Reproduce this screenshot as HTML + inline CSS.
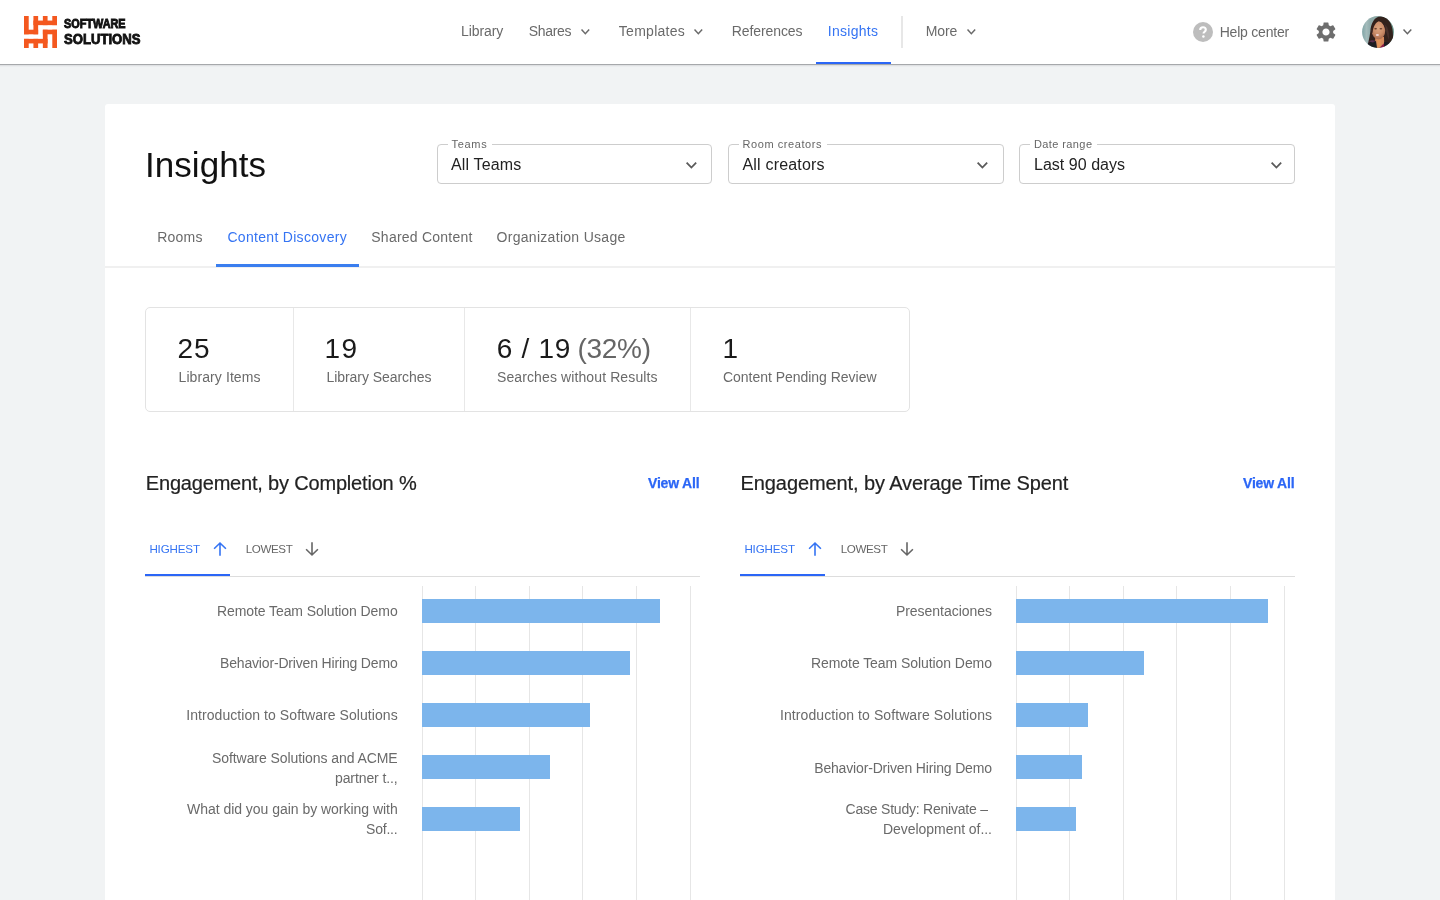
<!DOCTYPE html>
<html lang="en"><head><meta charset="utf-8"><title>Insights</title>
<style>
*{box-sizing:border-box;margin:0;padding:0}
html,body{width:1440px;height:900px;overflow:hidden}
body{background:#f1f3f4;font-family:"Liberation Sans",sans-serif;position:relative}
.t{position:absolute;white-space:nowrap;line-height:1;}
.b{position:absolute;display:block}
#L{position:absolute;left:0;top:0;width:1440px;height:900px;will-change:transform;transform:translateZ(0)}
#hdr{position:absolute;left:0;top:0;width:1440px;height:64px;background:#fff;}
#card{position:absolute;left:105px;top:104px;width:1230px;height:820px;background:#fff;border-radius:3px}
.sel{position:absolute;top:144px;height:40px;width:275px;border:1px solid #cdcdcd;border-radius:4px}
.lbg{position:absolute;top:143px;height:4px;background:#fff}
.logo1,.logo2{position:absolute;white-space:nowrap;line-height:1;font-weight:700;color:#111;transform-origin:0 0;-webkit-text-stroke:0.9px #111}
</style></head>
<body>
<div id="L">
<div id="card"></div>
<div id="hdr"></div>
<div class="b" style="left:0;top:64px;width:1440px;height:1px;background:#a6a8ab"></div>
<div class="b" style="left:0;top:65px;width:1440px;height:1px;background:#dfe1e3"></div>
<div class="b" style="left:0;top:66px;width:1440px;height:1px;background:#ebedef"></div>
<svg class="b" style="left:24px;top:16px" width="33" height="32" viewBox="0 0 33 32" fill="#f4581f"><rect x="0.00" y="0.00" width="4.71" height="18.29"/><rect x="0.00" y="13.71" width="14.14" height="4.57"/><rect x="9.43" y="0.00" width="4.71" height="18.29"/><rect x="9.43" y="4.57" width="23.57" height="4.57"/><rect x="18.86" y="0.00" width="4.71" height="9.14"/><rect x="28.29" y="0.00" width="4.71" height="9.14"/><rect x="28.29" y="13.71" width="4.71" height="18.29"/><rect x="18.86" y="13.71" width="14.14" height="4.57"/><rect x="18.86" y="13.71" width="4.71" height="18.29"/><rect x="0.00" y="22.86" width="23.57" height="4.57"/><rect x="9.43" y="22.86" width="4.71" height="9.14"/><rect x="0.00" y="22.86" width="4.71" height="9.14"/></svg>
<span class="logo1" style="left:64.200px;top:18px;font-size:12.300px;transform:scaleX(.884)">SOFTWARE</span>
<span class="logo2" style="left:64.200px;top:30.900px;font-size:15.200px;transform:scaleX(.863)">SOLUTIONS</span>
<div class="b" style="left:816px;top:62px;width:74.5px;height:2px;background:#2b66f6"></div>
<div class="b" style="left:901px;top:16px;width:2px;height:32px;background:#e7e7e7"></div>
<svg class="b" style="left:1193px;top:22px" width="20" height="20" viewBox="0 0 20 20"><circle cx="10" cy="10" r="10" fill="#bdbdbd"/><path d="M7.2 7.9c0-1.6 1.250-2.700 2.800-2.700s2.800 1.050 2.800 2.500c0 1.900-2.300 2.100-2.300 3.900" fill="none" stroke="#fff" stroke-width="2.1"/><circle cx="10.400" cy="14.500" r="1.250" fill="#fff"/></svg>
<svg class="b" style="left:1314px;top:20px" width="24" height="24" viewBox="0 0 24 24" fill="#6e6e6e"><path d="M19.14 12.94c.04-.3.06-.61.06-.94 0-.32-.02-.64-.07-.94l2.03-1.58a.49.49 0 0 0 .12-.61l-1.92-3.32a.488.488 0 0 0-.59-.22l-2.39.96c-.5-.38-1.03-.7-1.62-.94l-.36-2.54a.484.484 0 0 0-.48-.41h-3.84c-.24 0-.43.17-.47.41l-.36 2.54c-.59.24-1.13.57-1.62.94l-2.39-.96c-.22-.08-.47 0-.59.22L2.74 8.87c-.12.21-.08.47.12.61l2.03 1.58c-.05.3-.09.63-.09.94s.02.64.07.94l-2.03 1.58a.49.49 0 0 0-.12.61l1.92 3.32c.12.22.37.29.59.22l2.39-.96c.5.38 1.03.7 1.62.94l.36 2.54c.05.24.24.41.48.41h3.84c.24 0 .44-.17.47-.41l.36-2.54c.59-.24 1.13-.56 1.62-.94l2.39.96c.22.08.47 0 .59-.22l1.920-3.32c.12-.22.07-.47-.12-.61l-2.010-1.580zM12 15.600c-1.980 0-3.600-1.620-3.600-3.600s1.620-3.600 3.600-3.600 3.600 1.620 3.600 3.600-1.620 3.600-3.600 3.600z"/></svg>
<svg class="b" style="left:1362px;top:16px" width="32" height="32" viewBox="0 0 32 32"><defs><clipPath id="ac"><circle cx="16" cy="16" r="15.900"/></clipPath><filter id="ab" x="-20%" y="-20%" width="140%" height="140%"><feGaussianBlur stdDeviation="0.750"/></filter><linearGradient id="abg" x1="0" x2="1"><stop offset="0" stop-color="#7fa4a6"/><stop offset=".14" stop-color="#a4bbbb"/><stop offset=".26" stop-color="#8fabab"/><stop offset=".8" stop-color="#8fa9a0"/><stop offset="1" stop-color="#5f9388"/></linearGradient><radialGradient id="af" cx=".5" cy=".38" r=".65"><stop offset="0" stop-color="#dca57f"/><stop offset=".55" stop-color="#cc8f6b"/><stop offset="1" stop-color="#a5684b"/></radialGradient></defs><g clip-path="url(#ac)"><rect width="32" height="32" fill="url(#abg)"/><g filter="url(#ab)"><path d="M5 33 C6 27 7.500 22 8.300 16 C8.800 7 12.500 0.500 18.500 0.500 C26.500 0.500 30.200 8 30.800 16 C31.200 22 31 27 33 33 Z" fill="#33211e"/><path d="M22 8 C26 10 27.500 16 27 24 C25 20 24 14 22 8 Z" fill="#46302c"/><path d="M13.300 21 L22 21 L22.300 33 L12.800 33 Z" fill="#d48a5c"/><path d="M15 24 L19 24 L18.500 31 L15.500 31 Z" fill="#e0935a"/><ellipse cx="16.500" cy="14.300" rx="6.800" ry="9" fill="url(#af)"/><path d="M9.400 16 C9 9 12.500 4 17.500 4.600 C14 6.200 11.200 10 10.500 17 Z" fill="#33211e"/><path d="M17 4.500 C21 3.800 24.200 8 23.600 17 C23 11 21.300 6.800 17 4.500 Z" fill="#33211e"/><ellipse cx="13.600" cy="12.800" rx="1.400" ry=".750" fill="#5b3526" opacity=".9"/><ellipse cx="18.900" cy="12.800" rx="1.400" ry=".750" fill="#5b3526" opacity=".9"/><ellipse cx="15.400" cy="19" rx="1.600" ry="1.100" fill="#f0d3d2"/><path d="M3 33 C4.500 27.500 9 24 14 25.200 L15.200 33 Z" fill="#1f1a21"/><path d="M7 25.500 C9 23.800 12 23.800 13.500 25 L11 26.500 Z" fill="#5a2d4f"/><path d="M21.500 33 L22 26.500 C25.500 25 29.500 27 32 33 Z" fill="#1f1a21"/><path d="M16.200 33 L21.800 27.600 L22.500 33 Z" fill="#8a1d47"/></g></g></svg>
<div class="sel" style="left:437px;width:275px"></div>
<div class="lbg" style="left:447.5px;width:44px"></div>
<div class="sel" style="left:728px;width:275.5px"></div>
<div class="lbg" style="left:738.5px;width:88px"></div>
<div class="sel" style="left:1019px;width:276px"></div>
<div class="lbg" style="left:1029.5px;width:67px"></div>
<div class="b" style="left:105px;top:266px;width:1230px;height:2px;background:#f0f0f0"></div>
<div class="b" style="left:215.5px;top:264px;width:143.5px;height:3px;background:#3a7eef"></div>
<div class="b" style="left:145px;top:307px;width:765px;height:105px;border:1px solid #e3e3e3;border-radius:5px"></div>
<div class="b" style="left:293px;top:308px;width:1px;height:103px;background:#e8e8e8"></div>
<div class="b" style="left:464.3px;top:308px;width:1px;height:103px;background:#e8e8e8"></div>
<div class="b" style="left:689.6px;top:308px;width:1px;height:103px;background:#e8e8e8"></div>
<div class="b" style="left:145px;top:576px;width:555px;height:1px;background:#dddddd"></div>
<div class="b" style="left:145px;top:574px;width:84.5px;height:2px;background:#2b66f6"></div>
<div class="b" style="left:740px;top:576px;width:555px;height:1px;background:#dddddd"></div>
<div class="b" style="left:740px;top:574px;width:84.5px;height:2px;background:#2b66f6"></div>
<div class="b" style="left:422px;top:586px;width:1px;height:314px;background:#e6e6e6"></div>
<div class="b" style="left:475px;top:586px;width:1px;height:314px;background:#e6e6e6"></div>
<div class="b" style="left:529px;top:586px;width:1px;height:314px;background:#e6e6e6"></div>
<div class="b" style="left:582px;top:586px;width:1px;height:314px;background:#e6e6e6"></div>
<div class="b" style="left:636px;top:586px;width:1px;height:314px;background:#e6e6e6"></div>
<div class="b" style="left:690px;top:586px;width:1px;height:314px;background:#e6e6e6"></div>
<div class="b" style="left:1016px;top:586px;width:1px;height:314px;background:#e6e6e6"></div>
<div class="b" style="left:1069px;top:586px;width:1px;height:314px;background:#e6e6e6"></div>
<div class="b" style="left:1123px;top:586px;width:1px;height:314px;background:#e6e6e6"></div>
<div class="b" style="left:1176px;top:586px;width:1px;height:314px;background:#e6e6e6"></div>
<div class="b" style="left:1230px;top:586px;width:1px;height:314px;background:#e6e6e6"></div>
<div class="b" style="left:1284px;top:586px;width:1px;height:314px;background:#e6e6e6"></div>
<div class="b" style="left:422px;top:599px;width:238px;height:24px;background:#7cb5ec;"></div>
<div class="b" style="left:422px;top:651px;width:208px;height:24px;background:#7cb5ec;"></div>
<div class="b" style="left:422px;top:703px;width:168px;height:24px;background:#7cb5ec;"></div>
<div class="b" style="left:422px;top:755px;width:128px;height:24px;background:#7cb5ec;"></div>
<div class="b" style="left:422px;top:807px;width:98px;height:24px;background:#7cb5ec;"></div>
<div class="b" style="left:1016px;top:599px;width:252px;height:24px;background:#7cb5ec;"></div>
<div class="b" style="left:1016px;top:651px;width:128px;height:24px;background:#7cb5ec;"></div>
<div class="b" style="left:1016px;top:703px;width:72px;height:24px;background:#7cb5ec;"></div>
<div class="b" style="left:1016px;top:755px;width:66px;height:24px;background:#7cb5ec;"></div>
<div class="b" style="left:1016px;top:807px;width:60px;height:24px;background:#7cb5ec;"></div>
<svg class="b" style="left:579.05px;top:26.7px" width="12.7" height="9.2" viewBox="0 0 12.7 9.2"><path d="M2.525 2.525 L6.35 6.675000000000001 L10.174999999999999 2.525" fill="none" stroke="#6a6a6a" stroke-width="1.5" stroke-linecap="butt" stroke-linejoin="miter"/></svg>
<svg class="b" style="left:692.4499999999999px;top:26.7px" width="12.7" height="9.2" viewBox="0 0 12.7 9.2"><path d="M2.525 2.525 L6.35 6.675000000000001 L10.174999999999999 2.525" fill="none" stroke="#6a6a6a" stroke-width="1.5" stroke-linecap="butt" stroke-linejoin="miter"/></svg>
<svg class="b" style="left:965.15px;top:26.7px" width="12.7" height="9.2" viewBox="0 0 12.7 9.2"><path d="M2.525 2.525 L6.35 6.675000000000001 L10.174999999999999 2.525" fill="none" stroke="#6a6a6a" stroke-width="1.5" stroke-linecap="butt" stroke-linejoin="miter"/></svg>
<svg class="b" style="left:1400.5px;top:27.299999999999997px" width="12.8" height="9.2" viewBox="0 0 12.8 9.2"><path d="M2.525 2.525 L6.4 6.675000000000001 L10.275 2.525" fill="none" stroke="#666" stroke-width="1.5" stroke-linecap="butt" stroke-linejoin="miter"/></svg>
<svg class="b" style="left:683.8000000000001px;top:159.5px" width="14.8" height="10.2" viewBox="0 0 14.8 10.2"><path d="M2.63 2.63 L7.4 7.569999999999999 L12.17 2.63" fill="none" stroke="#5a5a5a" stroke-width="1.8" stroke-linecap="butt" stroke-linejoin="miter"/></svg>
<svg class="b" style="left:975.2px;top:159.5px" width="14.8" height="10.2" viewBox="0 0 14.8 10.2"><path d="M2.63 2.63 L7.4 7.569999999999999 L12.17 2.63" fill="none" stroke="#5a5a5a" stroke-width="1.8" stroke-linecap="butt" stroke-linejoin="miter"/></svg>
<svg class="b" style="left:1268.6px;top:159.5px" width="14.8" height="10.2" viewBox="0 0 14.8 10.2"><path d="M2.63 2.63 L7.4 7.569999999999999 L12.17 2.63" fill="none" stroke="#5a5a5a" stroke-width="1.8" stroke-linecap="butt" stroke-linejoin="miter"/></svg>
<svg class="b" style="left:209.7px;top:539px" width="20" height="20" viewBox="-10 -10 20 20"><path d="M-5.9 -0.2 L0 -6.0 L5.9 -0.2 M0 -5.7 L0 6.7" fill="none" stroke="#3574f3" stroke-width="1.6" stroke-linejoin="miter"/></svg>
<svg class="b" style="left:302px;top:538.8px" width="20" height="20" viewBox="-10 -10 20 20"><path d="M-5.9 0.2 L0 6.0 L5.9 0.2 M0 5.7 L0 -6.7" fill="none" stroke="#666" stroke-width="1.6" stroke-linejoin="miter"/></svg>
<svg class="b" style="left:804.7px;top:539px" width="20" height="20" viewBox="-10 -10 20 20"><path d="M-5.9 -0.2 L0 -6.0 L5.9 -0.2 M0 -5.7 L0 6.7" fill="none" stroke="#3574f3" stroke-width="1.6" stroke-linejoin="miter"/></svg>
<svg class="b" style="left:897px;top:538.8px" width="20" height="20" viewBox="-10 -10 20 20"><path d="M-5.9 0.2 L0 6.0 L5.9 0.2 M0 5.7 L0 -6.7" fill="none" stroke="#666" stroke-width="1.6" stroke-linejoin="miter"/></svg>
<span class="t" style="top:24.15px;font-size:14px;color:#6a6a6a;letter-spacing:-0.099px;left:461.00px;">Library</span>
<span class="t" style="top:24.15px;font-size:14px;color:#6a6a6a;letter-spacing:-0.312px;left:528.70px;">Shares</span>
<span class="t" style="top:24.15px;font-size:14px;color:#6a6a6a;letter-spacing:0.274px;left:618.80px;">Templates</span>
<span class="t" style="top:24.15px;font-size:14px;color:#6a6a6a;letter-spacing:-0.088px;left:731.70px;">References</span>
<span class="t" style="top:24.15px;font-size:14px;color:#3574f3;letter-spacing:0.279px;left:827.80px;">Insights</span>
<span class="t" style="top:24.15px;font-size:14px;color:#6a6a6a;letter-spacing:-0.132px;left:925.80px;">More</span>
<span class="t" style="top:24.85px;font-size:14px;color:#6a6a6a;letter-spacing:-0.209px;left:1219.70px;">Help center</span>
<span class="t" style="top:146.97px;font-size:35px;color:#111;letter-spacing:0.054px;left:145.00px;">Insights</span>
<span class="t" style="top:139.39px;font-size:11px;color:#666;letter-spacing:0.700px;left:451.50px;">Teams</span>
<span class="t" style="top:157.46px;font-size:16px;color:#222;letter-spacing:0.155px;left:451.00px;">All Teams</span>
<span class="t" style="top:139.39px;font-size:11px;color:#666;letter-spacing:0.572px;left:742.50px;">Room creators</span>
<span class="t" style="top:157.46px;font-size:16px;color:#222;letter-spacing:0.180px;left:742.50px;">All creators</span>
<span class="t" style="top:139.39px;font-size:11px;color:#666;letter-spacing:0.397px;left:1034.00px;">Date range</span>
<span class="t" style="top:157.46px;font-size:16px;color:#222;letter-spacing:0.025px;left:1034.00px;">Last 90 days</span>
<span class="t" style="top:229.95px;font-size:14px;color:#6a6a6a;letter-spacing:0.214px;left:157.30px;">Rooms</span>
<span class="t" style="top:229.95px;font-size:14px;color:#3574f3;letter-spacing:0.308px;left:227.40px;">Content Discovery</span>
<span class="t" style="top:229.95px;font-size:14px;color:#6a6a6a;letter-spacing:0.233px;left:371.30px;">Shared Content</span>
<span class="t" style="top:229.95px;font-size:14px;color:#6a6a6a;letter-spacing:0.298px;left:496.50px;">Organization Usage</span>
<span class="t" style="top:335.30px;font-size:28px;color:#1a1a1a;letter-spacing:0.000px;left:177.50px;letter-spacing:1px;">25</span>
<span class="t" style="top:369.75px;font-size:14px;color:#6a6a6a;letter-spacing:0.091px;left:178.50px;">Library Items</span>
<span class="t" style="top:335.30px;font-size:28px;color:#1a1a1a;letter-spacing:0.000px;left:324.40px;letter-spacing:1.5px;">19</span>
<span class="t" style="top:369.75px;font-size:14px;color:#6a6a6a;letter-spacing:-0.055px;left:326.50px;">Library Searches</span>
<span class="t" style="top:335.30px;font-size:28px;color:#1a1a1a;letter-spacing:0.709px;left:496.70px;">6 / 19</span>
<span class="t" style="top:335.30px;font-size:28px;color:#666;letter-spacing:-0.297px;left:577.50px;">(32%)</span>
<span class="t" style="top:369.75px;font-size:14px;color:#6a6a6a;letter-spacing:0.110px;left:497.00px;">Searches without Results</span>
<span class="t" style="top:335.30px;font-size:28px;color:#1a1a1a;letter-spacing:0.000px;left:722.50px;">1</span>
<span class="t" style="top:369.75px;font-size:14px;color:#6a6a6a;letter-spacing:-0.028px;left:723.00px;">Content Pending Review</span>
<span class="t" style="top:473.07px;font-size:20px;color:#222;letter-spacing:-0.185px;left:145.80px;-webkit-text-stroke:0.2px #222;">Engagement, by Completion %</span>
<span class="t" style="top:475.75px;font-size:14px;color:#2b66f6;letter-spacing:-0.187px;font-weight:700;left:648.00px;-webkit-text-stroke:0.25px;">View All</span>
<span class="t" style="top:473.07px;font-size:20px;color:#222;letter-spacing:-0.102px;left:740.60px;-webkit-text-stroke:0.2px #222;">Engagement, by Average Time Spent</span>
<span class="t" style="top:475.75px;font-size:14px;color:#2b66f6;letter-spacing:-0.187px;font-weight:700;left:1243.00px;-webkit-text-stroke:0.25px;">View All</span>
<span class="t" style="top:542.78px;font-size:11.6px;color:#3574f3;letter-spacing:-0.160px;left:149.40px;">HIGHEST</span>
<span class="t" style="top:542.78px;font-size:11.6px;color:#666;letter-spacing:-0.396px;left:245.80px;">LOWEST</span>
<span class="t" style="top:542.78px;font-size:11.6px;color:#3574f3;letter-spacing:-0.160px;left:744.40px;">HIGHEST</span>
<span class="t" style="top:542.78px;font-size:11.6px;color:#666;letter-spacing:-0.396px;left:840.80px;">LOWEST</span>
<span class="t" style="top:604.05px;font-size:14px;color:#6a6a6a;letter-spacing:-0.075px;right:1042.38px;">Remote Team Solution Demo</span>
<span class="t" style="top:656.05px;font-size:14px;color:#6a6a6a;letter-spacing:-0.168px;right:1042.47px;">Behavior-Driven Hiring Demo</span>
<span class="t" style="top:708.05px;font-size:14px;color:#6a6a6a;letter-spacing:0.065px;right:1042.23px;">Introduction to Software Solutions</span>
<span class="t" style="top:750.95px;font-size:14px;color:#6a6a6a;letter-spacing:-0.071px;right:1042.37px;">Software Solutions and ACME</span>
<span class="t" style="top:771.45px;font-size:14px;color:#6a6a6a;letter-spacing:-0.101px;right:1042.40px;">partner t..,</span>
<span class="t" style="top:802.35px;font-size:14px;color:#6a6a6a;letter-spacing:-0.030px;right:1042.33px;">What did you gain by working with</span>
<span class="t" style="top:821.85px;font-size:14px;color:#6a6a6a;letter-spacing:-0.197px;right:1042.50px;">Sof...</span>
<span class="t" style="top:604.05px;font-size:14px;color:#6a6a6a;letter-spacing:-0.031px;right:448.03px;">Presentaciones</span>
<span class="t" style="top:656.05px;font-size:14px;color:#6a6a6a;letter-spacing:-0.067px;right:448.07px;">Remote Team Solution Demo</span>
<span class="t" style="top:708.05px;font-size:14px;color:#6a6a6a;letter-spacing:0.080px;right:447.92px;">Introduction to Software Solutions</span>
<span class="t" style="top:760.65px;font-size:14px;color:#6a6a6a;letter-spacing:-0.164px;right:448.16px;">Behavior-Driven Hiring Demo</span>
<span class="t" style="top:802.35px;font-size:14px;color:#6a6a6a;letter-spacing:-0.223px;right:452.22px;">Case Study: Renivate –</span>
<span class="t" style="top:822.15px;font-size:14px;color:#6a6a6a;letter-spacing:-0.045px;right:448.05px;">Development of...</span>
</div>
</body></html>
